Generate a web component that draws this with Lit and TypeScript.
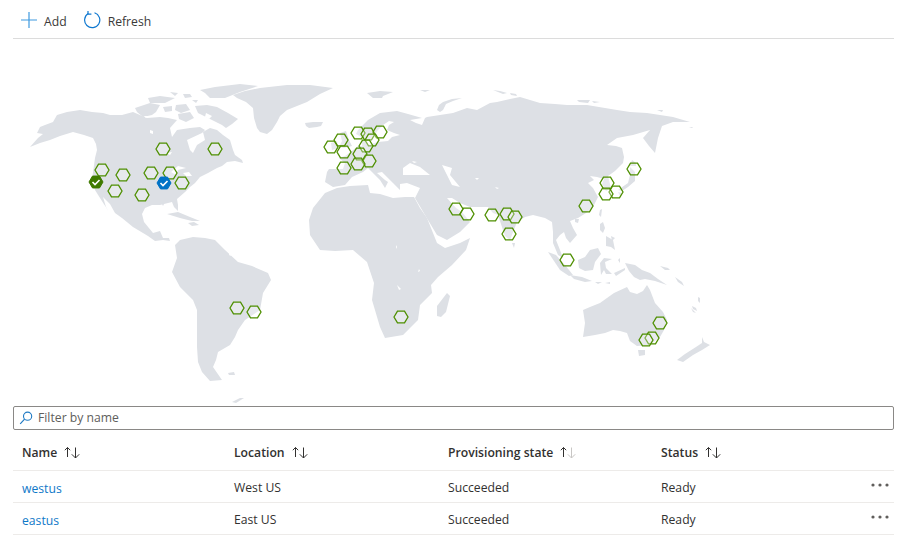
import { LitElement, html, css, svg } from "lit";
import { customElement } from "lit/decorators.js";

const LAND: number[][] = [
  // North America
  [30,147,40,143,50,140,60,136,73,132,84,135,93,138,96,144,97,150,95,158,92,180,95,190,100,198,109,212,106,207,103,197,110,204,115,213,122,218,133,227,148,236,155,241,163,240,170,241,169,238,163,238,160,231,153,233,144,222,142,214,145,208,152,205,160,205,172,202,174,207,178,211,178,205,177,199,185,192,190,187,195,183,200,177,208,173,217,168,222,166,227,162,235,161,243,163,242,160,235,155,233,150,230,140,223,135,217,130,210,128,203,132,205,140,197,145,193,153,190,150,187,140,202,133,205,130,200,127,190,128,177,130,172,137,170,128,177,120,168,118,160,117,147,118,133,112,122,115,110,115,103,113,92,112,80,110,67,112,57,115,53,122,45,125,40,127,37,133,43,134,38,138],
  // Greenland
  [233,95,245,91,260,88,287,85,310,85,333,88,320,94,307,102,297,106,287,110,280,116,277,122,272,130,267,134,260,132,257,128,254,118,253,108,246,102,237,98],
  // Arctic islands
  [135,108,150,103,160,105,156,112,152,115,143,117,137,112],[148,98,160,96,175,98,165,103,150,103],[163,107,172,106,172,111,165,112],[176,105,186,104,190,110,181,113,175,110],[195,106,207,105,217,107,228,113,238,119,232,124,226,128,222,125,216,122,208,118,198,113],[178,114,190,112,194,118,186,122,179,119],[200,90,215,87,240,84,258,86,240,92,225,98,210,98,205,93],[183,94,190,94,192,97,185,98],[170,92,178,93,175,96],[192,100,198,100,196,103],[212,148,216,146,226,153,220,155],[231,157,237,157,239,161,232,161],
  // Iceland, UK, Ireland
  [305,123,313,122,323,122,321,126,317,127,309,128,306,126],[340,133,346,131,349,140,352,146,344,148,339,147,342,141],[331,143,337,141,338,148,332,150],
  // Svalbard, Novaya Zemlya, Severnaya etc.
  [367,93,380,91,393,92,383,96,382,98,373,98],[420,90,430,90,425,92],[437,110,439,105,443,102,452,99,462,98,453,101,446,104,443,110,440,112],[493,90,500,91,507,93,503,94],[510,93,516,94,517,96,511,95],[577,100,590,100,588,103,579,102],[592,101,600,102,594,103],[657,110,663,110,662,112],[689,127,693,127,692,128],
  // Eurasia
  [327,172,329,169,343,169,345,163,339,158,345,156,352,151,358,146,362,146,362,140,366,140,368,145,378,142,388,141,392,137,400,135,394,133,387,130,389,125,394,122,389,121,383,125,378,130,374,136,368,141,363,138,356,134,358,130,368,120,380,113,397,111,408,114,422,118,410,120,416,123,422,125,425,118,427,117,440,115,453,113,467,108,477,110,490,103,497,102,510,99,520,97,530,100,540,103,555,104,567,105,587,105,605,108,617,110,630,112,647,113,660,115,673,117,690,122,673,122,662,126,658,138,655,153,649,146,643,138,650,130,633,135,617,138,607,145,616,146,622,148,624,157,623,163,615,171,608,176,611,188,606,191,602,184,604,179,597,177,590,176,594,180,588,183,593,188,598,197,593,207,586,213,578,218,570,221,573,228,577,235,570,243,566,238,564,232,560,235,556,240,560,250,563,258,558,255,553,243,553,232,552,222,545,218,533,215,525,217,517,222,510,240,505,236,498,215,493,213,488,207,470,207,460,203,452,198,447,198,456,208,462,212,470,222,460,232,447,240,437,235,425,215,415,198,420,188,407,183,400,184,400,190,393,183,382,172,377,173,385,180,388,182,385,188,380,180,368,168,363,172,352,177,345,185,333,187,325,182],
  // Africa
  [325,193,337,188,350,186,368,185,370,193,380,194,393,198,405,197,414,197,420,208,427,218,437,243,445,248,460,243,470,238,466,250,452,265,438,277,431,285,432,293,420,305,418,320,410,328,403,335,385,338,380,327,372,300,374,283,367,262,353,250,335,251,320,250,310,235,309,220,313,208],
  // Madagascar
  [437,306,447,293,450,296,446,312,441,317,437,316],
  // South America
  [175,245,180,240,193,237,205,238,215,240,225,250,238,262,252,266,268,273,271,280,263,293,260,310,245,320,238,330,235,337,230,345,218,352,216,360,213,367,222,380,210,381,202,372,198,362,197,347,197,310,193,300,180,287,172,272,177,258],
  // Falklands etc.
  [228,373,234,372,235,375,229,375],[232,402,240,398,244,398,236,403],
  // Cuba, Hispaniola, Jamaica etc.
  [167,214,178,212,190,217,200,221,192,221,180,218],[188,223,194,222,199,225,192,226],[161,202,164,204,163,206],
  // Australia, Tasmania, NZ
  [583,310,590,307,600,303,607,298,614,293,627,287,630,292,637,294,643,291,647,285,650,290,655,303,663,312,667,320,664,330,660,337,650,345,637,346,630,341,627,333,620,331,613,330,605,333,595,335,583,337,585,323],
  [638,350,645,350,645,355,639,356],
  [702,337,704,342,710,345,702,350,693,355,683,362,677,360,685,354,696,347,702,343],
  [692,306,696,308,697,311,693,309],
  // New Guinea and others
  [625,263,635,265,642,270,650,273,658,279,667,285,655,281,645,279,640,280,634,277,629,271],
  [578,260,585,257,590,250,598,248,601,254,595,262,593,270,585,271,579,268],
  [548,252,556,255,565,265,573,275,569,276,560,270],
  [570,275,582,277,592,281,585,282,574,279],
  [600,263,604,258,612,259,605,262,606,268,612,274,606,274,604,270,601,275],
  [595,282,602,282,598,284],[605,283,610,282,610,284],[618,260,620,258,620,263],[614,273,625,268,625,270,616,276],
  [600,224,603,222,605,228,603,233,600,230],[606,236,613,240,615,250,611,247,606,246],[611,236,615,238,612,241],
  [600,210,602,209,601,217,599,215],[575,219,579,219,578,223,575,222],
  [632,160,636,163,636,166,630,166],[630,167,635,172,635,181,628,187,622,191,618,190,628,183,630,175],[618,192,622,193,620,196],
  [512,243,515,243,514,248],
  [660,266,668,268,670,270,665,270],[675,277,682,282,684,286,678,282],[698,297,700,298,700,303,698,301],[691,308,696,313,693,312],
];

const HOLES: number[][] = [
  [403,168,410,163,420,167,430,175,417,175,403,175],
  [442,165,452,168,450,175,460,187,452,185,447,175],
  [412,161,417,162,414,163],
  [171,172,178,166,186,168,178,170,176,175],[183,173,189,172,192,176,186,176],
  [150,130,153,131,153,134,150,133],[166,153,172,152,170,155],[144,116,148,116,146,118],
  [206,113,212,116,209,119,205,117],
  [495,187,499,188,497,189],[475,178,479,178,477,180],
  [229,255,230,252,231,256],[419,269,420,271,418,272],
  [396,245,397,247,396,249],[397,285,401,289,399,290],
];

const HEX: [number, number][] = [
  [163,149],[215,149],[102,170],[123,175],[151,173],[170,173],[182,183],[115,191],[142,195],
  [358,133],[341,140],[331,147],[344,152],[344,168],[368,134],[380,132],[372,140],[366,146],[360,154],[369,161],[358,164],
  [456,209],[467,214],[492,215],[507,214],[515,217],[509,234],[586,206],
  [607,183],[616,192],[606,194],[634,169],[567,260],[660,323],[652,338],[646,340],
  [237,308],[254,312],[401,317],
];

const pts = (a: number[]) => {
  const out: string[] = [];
  for (let i = 0; i < a.length; i += 2) out.push(`${a[i]},${a[i + 1]}`);
  return out.join(" ");
};
const hexPts = (x: number, y: number, r = 7) =>
  `${x - r},${y} ${x - r / 2},${y - r * 0.85} ${x + r / 2},${y - r * 0.85} ${x + r},${y} ${x + r / 2},${y + r * 0.85} ${x - r / 2},${y + r * 0.85}`;

const sortIcon = (dimDown = false) => html`<svg class="sort" width="18" height="13" viewBox="0 0 18 13">
  <path d="M4.5 11V1.5M1.8 4.2 4.5 1.5 7.2 4.2" fill="none" stroke="#323130" stroke-width="1"/>
  <path d="M12.5 1.5V12M8.8 8.3 12.5 12 16.2 8.3" fill="none" stroke="${dimDown ? "#c8c6c4" : "#323130"}" stroke-width="1"/>
</svg>`;

const dots = html`<svg class="dots" width="18" height="4" viewBox="0 0 18 4"><circle cx="2" cy="2" r="1.6"/><circle cx="9" cy="2" r="1.6"/><circle cx="16" cy="2" r="1.6"/></svg>`;

@customElement("app-root")
export class AppRoot extends LitElement {
  static styles = css`
    :host {
      display: block;
      width: 908px;
      height: 543px;
      box-sizing: border-box;
      padding: 0 14px 0 13px;
      background: #fff;
      overflow: hidden;
      font-family: "Open Sans", "Noto Sans", sans-serif;
      font-size: 12.2px;
      color: #323130;
    }
    .toolbar {
      display: flex;
      align-items: center;
      gap: 16px;
      padding: 3px 0 0 8px;
      border-bottom: 1px solid #dcdcdc;
      height: 35px;
    }
    .tool { display: flex; align-items: center; gap: 7px; color: #3b3a39; }
    .tool span { padding-top: 2px; }
    .tool svg { margin-top: -2px; }
    .map { display: block; width: 881px; height: 367px; }
    .land { fill: #dde0e5; }
    .hole { fill: #fff; }
    .hex { fill: rgba(255, 255, 255, 0.3); stroke: #4e8f00; stroke-width: 1.3; }
    .filter {
      height: 24px;
      box-sizing: border-box;
      border: 1px solid #8a8886;
      border-radius: 2px;
      display: flex;
      align-items: center;
      gap: 5px;
      padding-left: 5px;
      color: #605e5c;
    }
    .filter span { padding-bottom: 2px; }
    .row {
      display: grid;
      grid-template-columns: 212px 214px 213px 210px 32px;
      align-items: center;
      padding-left: 9px;
      border-bottom: 1px solid #edebe9;
      height: 32px;
      box-sizing: border-box;
      padding-top: 2px;
    }
    .head { font-weight: 600; margin-top: 1px; padding-top: 3px; height: 40px; }
    .head span { display: flex; align-items: center; gap: 6px; }
    a { color: #0f78c8; text-decoration: none; padding-top: 1px; }
    .sort { display: block; }
    .dots { display: block; fill: #605e5c; margin-bottom: 6px; }
  `;

  render() {
    const rows = [
      ["westus", "West US"],
      ["eastus", "East US"],
    ];
    return html`
      <div class="toolbar">
        <div class="tool">
          <svg width="16" height="16" viewBox="0 0 16 16"><path d="M8 0v16M0 8h16" stroke="#3f9ae0" stroke-width="1.2" fill="none"/></svg>
          <span>Add</span>
        </div>
        <div class="tool">
          <svg width="18" height="18" viewBox="0 0 18 18"><path d="M5.2 2.6A7.6 7.6 0 1 0 11.5 1.8" fill="none" stroke="#0f78d0" stroke-width="1.2"/><path d="M5 0v3.2h3.4" fill="none" stroke="#0f78d0" stroke-width="1.2"/></svg>
          <span>Refresh</span>
        </div>
      </div>
      <svg class="map" viewBox="13 39 881 367">
        ${LAND.map((a) => svg`<polygon class="land" points=${pts(a)}/>`)}
        ${HOLES.map((a) => svg`<polygon class="hole" points=${pts(a)}/>`)}
        ${HEX.map(([x, y]) => svg`<polygon class="hex" points=${hexPts(x, y)}/>`)}
        <polygon points=${hexPts(96, 182)} fill="#3f7a00" stroke="#3f7a00" stroke-width="1"/>
        <path d="M92.5 182l2.5 2.5 4.5-4.5" fill="none" stroke="#fff" stroke-width="1.6"/>
        <polygon points=${hexPts(164, 183)} fill="#0072c6" stroke="#0072c6" stroke-width="1"/>
        <path d="M160.5 183l2.5 2.5 4.5-4.5" fill="none" stroke="#fff" stroke-width="1.6"/>
      </svg>
      <div class="filter">
        <svg width="14" height="14" viewBox="0 0 14 14"><circle cx="8.6" cy="5.2" r="4.1" fill="none" stroke="#1f7ac4" stroke-width="1.1"/><path d="M5.6 8.2 1.2 12.8" stroke="#1f7ac4" stroke-width="1.2" fill="none"/></svg>
        <span>Filter by name</span>
      </div>
      <div class="row head">
        <span>Name ${sortIcon()}</span>
        <span>Location ${sortIcon()}</span>
        <span>Provisioning state ${sortIcon(true)}</span>
        <span>Status ${sortIcon()}</span>
        <span></span>
      </div>
      ${rows.map(
        ([n, l]) => html`<div class="row">
          <a href="#">${n}</a><span>${l}</span><span>Succeeded</span><span>Ready</span>${dots}
        </div>`
      )}
    `;
  }
}
